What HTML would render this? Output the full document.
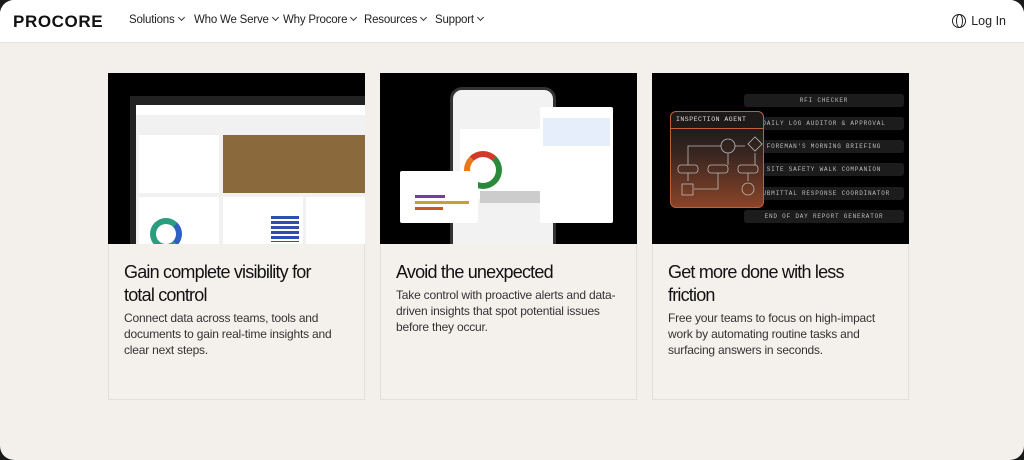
<!DOCTYPE html>
<html><head><style>
*{margin:0;padding:0;box-sizing:border-box}
body{width:1024px;height:460px;background:#1a1a1a;font-family:"Liberation Sans",sans-serif;overflow:hidden}
.page{position:absolute;left:0;top:0;width:1024px;height:460px;background:#f3f0ec;border-radius:14px;overflow:hidden}
.hdr{height:43px;background:#fff;border-bottom:1px solid #e6e2dd;position:relative}
.logo{position:absolute;left:13px;top:12px;font-weight:bold;font-size:17px;letter-spacing:0.6px;color:#111}
.nav{position:absolute;left:129px;top:14px;font-size:11.5px;color:#222;white-space:nowrap;letter-spacing:-0.2px}
.nav span{position:absolute;top:0}
.nav span:after{content:"";display:inline-block;width:4px;height:4px;border-right:1.3px solid #333;border-bottom:1.3px solid #333;transform:rotate(45deg);margin-left:4px;position:relative;top:-3px}
.login{position:absolute;right:18px;top:14px;font-size:12.5px;color:#222}
.globe{position:absolute;right:58px;top:14px;width:14px;height:14px;border:1.4px solid #222;border-radius:50%}
.globe:before{content:"";position:absolute;left:3px;top:-1px;width:5px;height:12px;border:1.2px solid #222;border-radius:50%}
.card{position:absolute;top:73px;width:257px;height:327px;background:#f4f1ed;border:1px solid #e3dfda}
.img{position:absolute;left:-1px;top:-1px;width:257px;height:171px;background:#000;overflow:hidden}
.card h2{position:absolute;left:15px;top:187px;width:215px;font-size:18px;line-height:23px;font-weight:normal;color:#111;letter-spacing:-0.8px}
.card p{position:absolute;left:15px;width:226px;font-size:12px;line-height:16px;color:#333;letter-spacing:-0.2px}
.pill{position:absolute;height:13px;background:#1c1c1c;border-radius:3px;color:#bbb;font-family:"Liberation Mono",monospace;font-size:6px;text-align:center;line-height:13px;letter-spacing:0.8px;white-space:nowrap;overflow:hidden}
</style></head><body><div class="page">
<div class="hdr"><div class="logo">PROCORE</div>
<div class="nav"><span style="left:0">Solutions</span><span style="left:65px">Who We Serve</span><span style="left:154px">Why Procore</span><span style="left:235px">Resources</span><span style="left:306px">Support</span></div>
<div class="globe"></div><div class="login">Log In</div></div>

<div class="card" style="left:108px"><div class="img">
<div style="position:absolute;left:22px;top:23px;width:240px;height:150px;background:#222"></div>
<div style="position:absolute;left:28px;top:32px;width:230px;height:140px;background:#f1f1f1"></div>
<div style="position:absolute;left:28px;top:32px;width:230px;height:10px;background:#fff"></div>
<div style="position:absolute;left:31px;top:62px;width:80px;height:58px;background:#fff"></div>
<div style="position:absolute;left:115px;top:62px;width:143px;height:58px;background:#8a6a3c"></div>
<div style="position:absolute;left:31px;top:124px;width:80px;height:50px;background:#fff"></div>
<div style="position:absolute;left:115px;top:124px;width:80px;height:50px;background:#fff"></div>
<div style="position:absolute;left:198px;top:124px;width:60px;height:50px;background:#fff"></div>
<div style="position:absolute;left:42px;top:145px;width:32px;height:32px;border:6px solid #2a9d7e;border-right-color:#2e5fc2;border-radius:50%"></div>
<div style="position:absolute;left:163px;top:143px;width:28px;height:26px;background:repeating-linear-gradient(#2e4fb0 0 3px,#fff 3px 5px)"></div>
</div>
<h2>Gain complete visibility for total control</h2>
<p style="top:236px;width:218px">Connect data across teams, tools and documents to gain real-time insights and clear next steps.</p></div>

<div class="card" style="left:380px"><div class="img">
<div style="position:absolute;left:70px;top:14px;width:106px;height:170px;background:#f2f2f2;border:3px solid #333;border-radius:12px"></div>
<div style="position:absolute;left:80px;top:56px;width:88px;height:70px;background:#fff"></div>
<div style="position:absolute;left:84px;top:78px;width:38px;height:38px;border:6px solid #2a8a3a;border-left-color:#e87a1a;border-top-color:#d03a2a;border-radius:50%"></div>
<div style="position:absolute;left:100px;top:118px;width:70px;height:12px;background:#ccc"></div>
<div style="position:absolute;left:20px;top:98px;width:78px;height:52px;background:#fff;border-radius:2px"></div>
<div style="position:absolute;left:35px;top:122px;width:30px;height:3px;background:#7a3aa0"></div>
<div style="position:absolute;left:35px;top:128px;width:54px;height:3px;background:#c8a030"></div>
<div style="position:absolute;left:35px;top:134px;width:28px;height:3px;background:#c85a20"></div>
<div style="position:absolute;left:160px;top:34px;width:73px;height:116px;background:#fff;border-radius:2px"></div>
<div style="position:absolute;left:163px;top:45px;width:67px;height:28px;background:#e6edfb"></div>
</div>
<h2>Avoid the unexpected</h2>
<p style="top:213px">Take control with proactive alerts and data-driven insights that spot potential issues before they occur.</p></div>

<div class="card" style="left:652px"><div class="img">
<div class="pill" style="left:92px;top:21px;width:160px">RFI CHECKER</div>
<div class="pill" style="left:92px;top:44px;width:160px">DAILY LOG AUDITOR &amp; APPROVAL</div>
<div class="pill" style="left:92px;top:67px;width:160px">FOREMAN'S MORNING BRIEFING</div>
<div class="pill" style="left:92px;top:90px;width:160px">SITE SAFETY WALK COMPANION</div>
<div class="pill" style="left:92px;top:114px;width:160px">SUBMITTAL RESPONSE COORDINATOR</div>
<div class="pill" style="left:92px;top:137px;width:160px">END OF DAY REPORT GENERATOR</div>
<div style="position:absolute;left:18px;top:38px;width:94px;height:97px;border:1px solid #c0603a;border-radius:6px;background:linear-gradient(#1e1a19 15%,#3a2620 45%,#8a4428)"></div>
<div style="position:absolute;left:24px;top:43px;color:#ddd;font-family:'Liberation Mono',monospace;font-size:6.5px;letter-spacing:0.5px">INSPECTION AGENT</div>
<div style="position:absolute;left:18px;top:55px;width:94px;height:1px;background:#c0603a"></div>
<svg style="position:absolute;left:18px;top:56px" width="94" height="78" fill="none" stroke="#bbb" stroke-width="0.8"><circle cx="58" cy="17" r="7"/><rect x="80" y="10" width="10" height="10" transform="rotate(45 85 15)"/><rect x="8" y="36" width="20" height="8" rx="3"/><rect x="38" y="36" width="20" height="8" rx="3"/><rect x="68" y="36" width="20" height="8" rx="3"/><rect x="12" y="55" width="11" height="11"/><circle cx="78" cy="60" r="6"/><path d="M51 17H18V36M58 24V36M65 17H75M85 24V36M18 44V52M48 44V60H24M78 44V52"/></svg>
</div>
<h2>Get more done with less friction</h2>
<p style="top:236px">Free your teams to focus on high-impact work by automating routine tasks and surfacing answers in seconds.</p></div>
</div></body></html>
